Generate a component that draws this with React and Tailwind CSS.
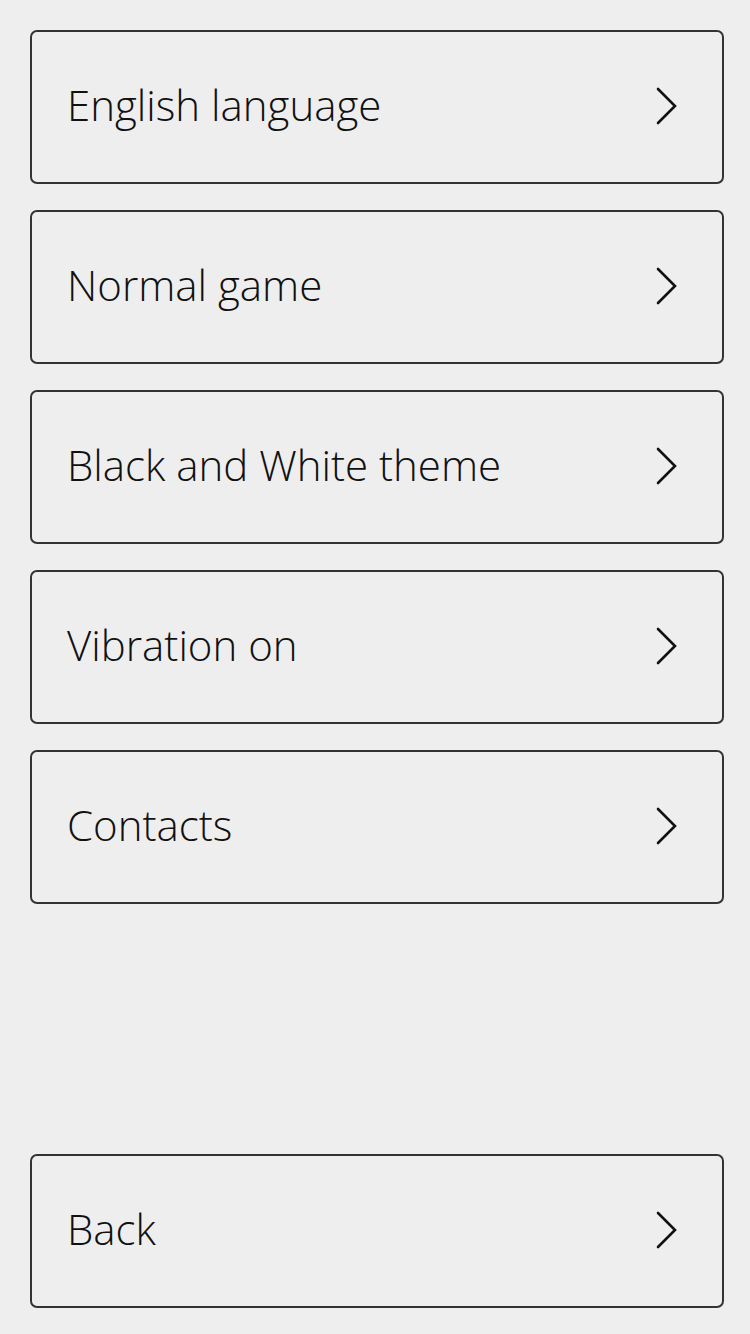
import React from 'react'

const items = [
  'English language',
  'Normal game',
  'Black and White theme',
  'Vibration on',
  'Contacts',
]

function Chevron() {
  return (
    <svg width="26" height="40" viewBox="0 0 26 40" fill="none" className="shrink-0 mb-[2px]">
      <path d="M4 3 L21 20 L4 37" stroke="#111" strokeWidth="2.6" strokeLinecap="round" strokeLinejoin="miter" />
    </svg>
  )
}

function Row({ label }) {
  return (
    <button
      type="button"
      className="w-full h-[154px] flex items-center justify-between border-2 border-[#333333] rounded-[7px] pl-[35px] pr-[42px] text-left"
    >
      <span className="text-[42px] font-light text-[#111111] leading-none mb-[4px]">{label}</span>
      <Chevron />
    </button>
  )
}

export default function App() {
  return (
    <div
      className="w-[750px] h-[1334px] bg-[#eeeeee] flex flex-col pl-[30px] pr-[26px] pt-[30px] pb-[26px]"
      style={{ fontFamily: '"Open Sans", "Liberation Sans", sans-serif' }}
    >
      <div className="flex flex-col gap-[26px]">
        {items.map(label => (
          <Row key={label} label={label} />
        ))}
      </div>
      <div className="flex-1" />
      <Row label="Back" />
    </div>
  )
}
